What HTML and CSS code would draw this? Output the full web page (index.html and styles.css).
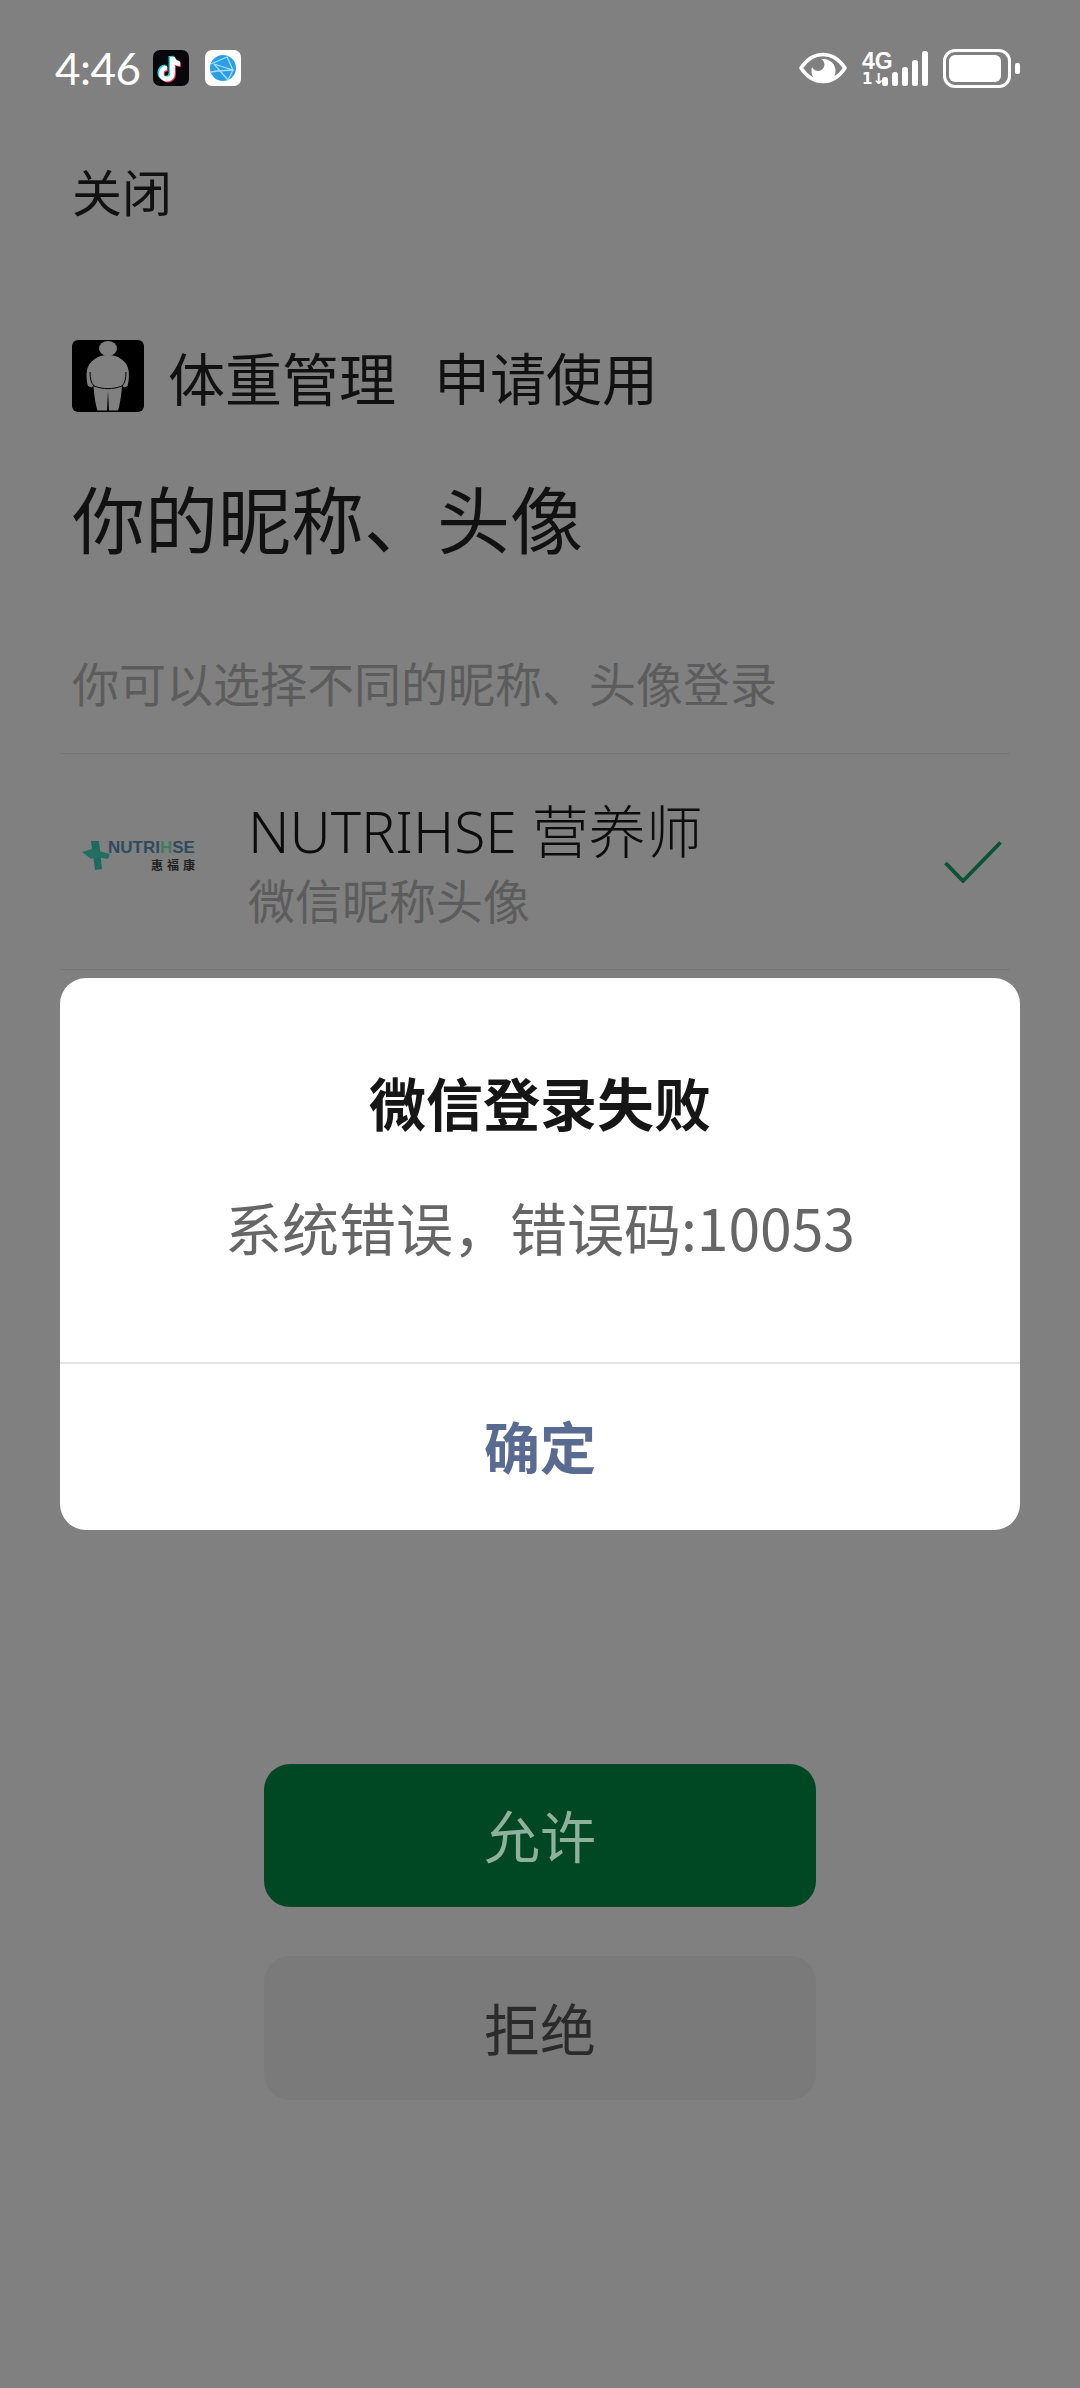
FILE: index.html
```html
<!DOCTYPE html>
<html lang="zh-CN">
<head>
<meta charset="utf-8">
<title>微信登录</title>
<link rel="stylesheet" href="styles.css">
</head>
<body>
<div class="page">
  <header class="statusbar">
    <div class="status-left">
      <span class="time">4:46</span>
      <svg class="app-badge" viewBox="0 0 36 36"><rect width="36" height="36" rx="7" fill="#08080c"/>
        <g fill="none" stroke-width="4.800">
          <path d="M18 6v16.500a5.600 5.600 0 1 1-5.600-5.600" stroke="#25d8de"/>
          <path d="M18 6c.5 4 3.500 6.500 7.500 6.800" stroke="#25d8de"/>
          <path d="M20.500 8v16.500a5.600 5.600 0 1 1-5.600-5.600" stroke="#f0365f"/>
          <path d="M20.500 8c.5 4 3.500 6.500 7.500 6.800" stroke="#f0365f"/>
          <path d="M19.500 7v16.500a5.600 5.600 0 1 1-5.600-5.600" stroke="#fff"/>
          <path d="M19.500 7c.5 4 3.500 6.500 7.500 6.800" stroke="#fff"/>
        </g></svg>
      <svg class="app-badge second" viewBox="0 0 36 36"><rect width="36" height="36" rx="7" fill="#fff"/>
        <circle cx="18" cy="18" r="13" fill="#2a9fe6"/>
        <path d="M6 14l16-7 6 13-19-6M9 14l14 16 5-10M6 22l6-1 16-1" fill="none" stroke="#a9dcf7" stroke-width="1.300"/></svg>
    </div>
    <div class="status-right">
      <svg class="eye" viewBox="0 0 48 32"><path d="M2 16C8 7 15 2.500 24 2.500S40 7 46 16c-6 9-13 13.500-22 13.500S8 25 2 16z" fill="none" stroke="#fff" stroke-width="3.600" stroke-linejoin="round"/>
        <circle cx="24.500" cy="19" r="12" fill="#fff"/><circle cx="19" cy="12.500" r="6.500" fill="#808080"/></svg>
      <div class="network">
        <span class="net-type">4G</span>
        <span class="net-arrows">1↓</span>
      </div>
      <div class="signal"><i class="bar b1"></i><i class="bar b2"></i><i class="bar b3"></i><i class="bar b4"></i><i class="bar b5"></i></div>
      <div class="battery"><div class="battery-fill"></div></div>
      <div class="battery-nub"></div>
    </div>
  </header>

  <div class="close">关闭</div>

  <main class="content">
    <div class="app-row">
      <svg class="app-icon" viewBox="0 0 72 72"><rect width="72" height="72" rx="6" fill="#000"/>
        <ellipse cx="36" cy="8.500" rx="9" ry="7.500" fill="#808080"/>
        <path d="M36 15c-10 0-19 6-21 15-1 6 0 13 1 16l3.500 1.500 2-2c.5 7 1.500 17 4 25h9.500l1-20 1 20h9c2.500-8 3.500-18 4-25l2 2 3.500-1.500c1-3 2-10 1-16C55 21 46 15 36 15z" fill="#808080"/>
        <path d="M18 32c0 6 1 11 4 14 9 3.500 19 3.500 28 0 3-3 4-8 4-14" fill="none" stroke="#000" stroke-width="1"/></svg>
      <span class="app-name">体重管理</span>
      <span class="app-request">申请使用</span>
    </div>
    <h1 class="scope">你的昵称、头像</h1>
    <p class="hint">你可以选择不同的昵称、头像登录</p>
    <div class="account">
      <div class="logo">
        <svg class="logo-mark" viewBox="0 0 30 30"><path d="M9 0h8l3 28-7 1z" fill="#1d6a5f"/><path d="M0 11l10-3 18 5-2 5-12-2-5 2z" fill="#236f62"/></svg>
        <div class="logo-text"><span class="logo-name">NUTRI<span class="logo-accent">H</span>SE</span><span class="logo-cn">惠福康</span></div>
      </div>
      <div class="account-text">
        <span class="account-name">NUTRIHSE 营养师</span>
        <span class="account-sub">微信昵称头像</span>
      </div>
      <svg class="check" viewBox="0 0 58 42"><path d="M1.500 22L19 40 56.500 1.500" fill="none" stroke="#0c5236" stroke-width="3.800"/></svg>
    </div>
    <div class="actions">
      <div class="btn btn-allow">允许</div>
      <div class="btn btn-deny">拒绝</div>
    </div>
  </main>

  <div class="dialog">
    <div class="dialog-body">
      <h2 class="dialog-title">微信登录失败</h2>
      <p class="dialog-msg">系统错误，错误码:10053</p>
    </div>
    <div class="dialog-ok">确定</div>
  </div>
</div>
</body>
</html>
```

FILE: styles.css
```css
* { box-sizing: border-box; }
html, body { margin: 0; padding: 0; }
body { background: #808080; font-family: "Noto Sans CJK SC", "Noto Sans", sans-serif; }
.page { position: relative; width: 1080px; height: 2388px; overflow: hidden; background: #808080; color: #111; }

.statusbar { height: 136px; padding: 0 60px 0 55px; display: flex; justify-content: space-between; align-items: center; color: #fff; }
.status-left, .status-right { display: flex; align-items: center; }
.time { width: 98px; font-family: Lato, sans-serif; font-size: 44px; line-height: 50px; letter-spacing: -0.500px; }
.app-badge { width: 36px; height: 36px; display: block; }
.app-badge.second { margin-left: 16px; }
.eye { width: 48px; height: 32px; display: block; }
.network { width: 20px; height: 36px; margin-left: 15px; display: flex; flex-direction: column; font-family: "Liberation Sans", sans-serif; font-weight: 700; line-height: 1; }
.net-type { font-size: 23px; height: 22px; width: 28px; }
.net-arrows { font-size: 15px; height: 14px; width: 20px; white-space: nowrap; font-family: "DejaVu Sans", sans-serif; }
.signal { display: flex; align-items: flex-end; gap: 4px; height: 36px; }
.bar { display: block; width: 6px; border-radius: 2.500px; background: #fff; }
.b1 { height: 9px; }
.b2 { height: 14px; }
.b3 { height: 19px; }
.b4 { height: 26px; }
.b5 { height: 35px; }
.battery { width: 68px; height: 39px; margin-left: 15px; border: 3px solid #fff; border-radius: 12px; padding: 3px; }
.battery-fill { width: 52px; height: 27px; background: #fff; border-radius: 6px; }
.battery-nub { width: 5px; height: 11px; margin-left: 4px; background: #fff; border-radius: 2px; }

.close { height: 114px; padding-left: 72px; font-size: 50px; line-height: 108px; }

.content { padding: 90px 70px 0 72px; }
.app-row { height: 72px; display: flex; align-items: center; }
.app-icon { width: 72px; height: 72px; display: block; flex: none; }
.app-name { margin-left: 24px; font-size: 57px; line-height: 72px; }
.app-request { margin-left: 38px; font-size: 56px; line-height: 72px; }
.scope { margin: 54px 0 0; height: 108px; font-size: 73px; line-height: 100px; font-weight: 400; }
.hint { margin: 81px 0 0; height: 60px; font-size: 47px; line-height: 54px; color: #5c5c5c; }

.account { position: relative; margin: 38px 0 0 -12px; height: 217px; padding-left: 188px; display: flex; align-items: center; border-top: 1px solid #767676; border-bottom: 1px solid #767676; }
.logo { position: absolute; left: 22px; top: 84px; display: flex; align-items: flex-start; }
.logo-mark { width: 30px; height: 30px; display: block; margin-top: 3px; margin-right: -4px; }
.logo-text { display: flex; flex-direction: column; align-items: flex-end; font-family: "Liberation Sans", sans-serif; }
.logo-name { font-size: 17px; line-height: 19px; color: #2f4a5c; font-weight: 700; }
.logo-accent { color: #3f7a62; }
.logo-cn { font-size: 12px; line-height: 15px; color: #222; letter-spacing: 4px; margin-right: -4px; font-family: "Noto Sans CJK SC", sans-serif; font-weight: 700; }
.account-text { display: flex; flex-direction: column; padding-top: 4px; }
.account-name { font-size: 57px; line-height: 70px; font-weight: 300; font-family: "Noto Sans", "Noto Sans CJK SC", sans-serif; white-space: nowrap; color: #0c0c0c; }
.account-sub { font-size: 47px; line-height: 66px; color: #5c5c5c; }
.check { position: absolute; right: 8px; top: 87px; width: 58px; height: 42px; display: block; }

.actions { margin: 794px 0 0 192px; width: 552px; display: flex; flex-direction: column; gap: 49px; }
.btn { height: 143px; padding-bottom: 4px; border-radius: 26px; display: flex; align-items: center; justify-content: center; font-size: 56px; }
.btn-allow { background: #004723; color: #8fb09c; }
.btn-deny { background: #7a7a7a; color: #2b2b2b; height: 144px; }

.dialog { position: absolute; left: 60px; top: 978px; width: 960px; height: 552px; background: #fff; border-radius: 26px; display: flex; flex-direction: column; }
.dialog-body { height: 386px; border-bottom: 2px solid #e4e4e4; text-align: center; }
.dialog-title { margin: 86px 0 0; font-size: 57px; line-height: 74px; font-weight: 700; color: #161616; }
.dialog-msg { margin: 50px 0 0; font-size: 57px; line-height: 76px; color: #666; font-weight: 400; }
.dialog-ok { flex: 1; padding-bottom: 6px; display: flex; align-items: center; justify-content: center; font-size: 56px; font-weight: 700; color: #5a6b92; }
```
